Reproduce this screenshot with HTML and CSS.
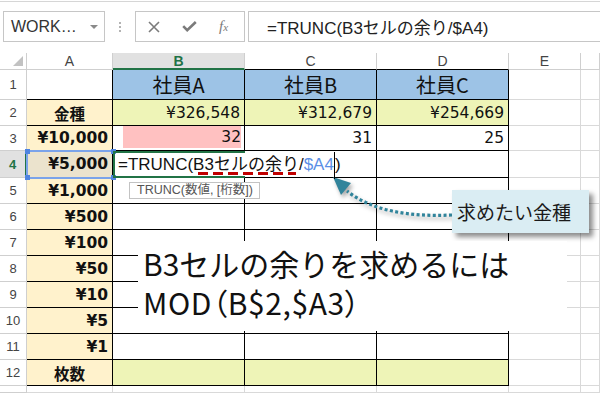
FILE: index.html
```html
<!DOCTYPE html>
<html lang="ja">

<head>
    <meta charset="UTF-8">
    <title>TRUNC関数で枚数を求める</title>
    <link rel="stylesheet" href="styles.css">
</head>

<body>

    <div class="ribbon-edge"></div>

    <div class="formula-bar">
        <div class="name-box">
            <span>WORK…</span>
            <span class="drop"></span>
        </div>
        <div class="grip"><i></i><i></i><i></i></div>
        <div class="fx-box">
            <svg width="12" height="12" viewBox="0 0 12 12"><path d="M1 1L11 11M11 1L1 11" stroke="#7b7b7b" stroke-width="1.6" fill="none"/></svg>
            <svg width="15" height="11" viewBox="0 0 15 11"><path d="M1.2 5.2L5.2 9.2L13.8 1" stroke="#7b7b7b" stroke-width="2.6" fill="none"/></svg>
            <span class="fx">f<small>x</small></span>
        </div>
        <div class="formula-input">=TRUNC(B3セルの余り/$A4)</div>
    </div>

    <div class="sheet-wrap">
        <div class="sheet">
            <!-- 列見出し -->
            <div class="corner"><span></span></div>
            <div class="ch">A</div>
            <div class="ch sel">B</div>
            <div class="ch tb">C</div>
            <div class="ch tb">D</div>
            <div class="ch">E</div>
            <div class="ch"></div>

            <!-- 1 -->
            <div class="rh">1</div>
            <div class="t"></div>
            <div class="t blue">社員A</div>
            <div class="t blue">社員B</div>
            <div class="t blue">社員C</div>
            <div class="g"></div>
            <div class="g"></div>

            <!-- 2 -->
            <div class="rh">2</div>
            <div class="t a c">金種</div>
            <div class="t yg num">¥326,548</div>
            <div class="t yg num">¥312,679</div>
            <div class="t yg num">¥254,669</div>
            <div class="g"></div>
            <div class="g"></div>

            <!-- 3 -->
            <div class="rh">3</div>
            <div class="t a">¥10,000</div>
            <div class="t num"><span class="pink">32</span></div>
            <div class="t num">31</div>
            <div class="t num">25</div>
            <div class="g"></div>
            <div class="g"></div>

            <!-- 4 (編集中) -->
            <div class="rh cur">4</div>
            <div class="t a ref-cell">¥5,000</div>
            <div class="t edit"><span>=TRUNC(<span class="squiggle">B3セルの余り</span>/<span class="ref">$A4</span><span class="caret"></span>)</span></div>
            <div class="t"></div>
            <div class="t"></div>
            <div class="g"></div>
            <div class="g"></div>

            <!-- 5 -->
            <div class="rh">5</div>
            <div class="t a">¥1,000</div>
            <div class="t"></div>
            <div class="t"></div>
            <div class="t"></div>
            <div class="g"></div>
            <div class="g"></div>

            <!-- 6 -->
            <div class="rh">6</div>
            <div class="t a">¥500</div>
            <div class="t"></div>
            <div class="t"></div>
            <div class="t"></div>
            <div class="g"></div>
            <div class="g"></div>

            <!-- 7 -->
            <div class="rh">7</div>
            <div class="t a">¥100</div>
            <div class="t"></div>
            <div class="t"></div>
            <div class="t"></div>
            <div class="g"></div>
            <div class="g"></div>

            <!-- 8 -->
            <div class="rh">8</div>
            <div class="t a">¥50</div>
            <div class="t"></div>
            <div class="t"></div>
            <div class="t"></div>
            <div class="g"></div>
            <div class="g"></div>

            <!-- 9 -->
            <div class="rh">9</div>
            <div class="t a">¥10</div>
            <div class="t"></div>
            <div class="t"></div>
            <div class="t"></div>
            <div class="g"></div>
            <div class="g"></div>

            <!-- 10 -->
            <div class="rh">10</div>
            <div class="t a">¥5</div>
            <div class="t"></div>
            <div class="t"></div>
            <div class="t"></div>
            <div class="g"></div>
            <div class="g"></div>

            <!-- 11 -->
            <div class="rh">11</div>
            <div class="t a">¥1</div>
            <div class="t"></div>
            <div class="t"></div>
            <div class="t"></div>
            <div class="g"></div>
            <div class="g"></div>

            <!-- 12 -->
            <div class="rh">12</div>
            <div class="t a c">枚数</div>
            <div class="t yg"></div>
            <div class="t yg"></div>
            <div class="t yg"></div>
            <div class="g"></div>
            <div class="g"></div>

            <!-- 13 -->
            <div class="rh"></div>
            <div class="g"></div>
            <div class="g"></div>
            <div class="g"></div>
            <div class="g"></div>
            <div class="g"></div>
            <div class="g"></div>
        </div>

        <!-- シートの上に重ねるもの -->
        <div class="ref-box"><i class="h tl"></i><i class="h tr"></i><i class="h bl"></i><i class="h br"></i></div>
        <div class="tooltip">TRUNC(数値, [桁数])</div>

        <svg class="arrow" width="135" height="52" viewBox="325 173 135 52">
            <path d="M452 215C410 217 372 211 347 191" fill="none" stroke="#31849b" stroke-width="3.2" stroke-dasharray="3 2.4"/>
            <polygon points="333,177 351,183 341,195" fill="#31849b"/>
        </svg>
        <div class="callout">求めたい金種</div>

        <div class="note">
            <div class="line">B3セルの余りを求めるには</div>
            <div class="line palt">MOD（B$2,$A3）</div>
        </div>
    </div>

</body>

</html>
```

FILE: styles.css
```css
body {
    margin: 0;
    background: #fff;
    font-family: "Liberation Sans", "Noto Sans CJK JP", sans-serif;
    color: #111;
    overflow: hidden;
}

.ribbon-edge {
    height: 1px;
    margin-top: 1px;
    background: #d6d6d6;
}

/* 数式バー */
.formula-bar {
    display: flex;
    height: 31px;
    margin-top: 9px;
    padding-left: 3px;
}

.name-box {
    width: 102px;
    box-sizing: border-box;
    border: 1px solid #c6c6c6;
    display: flex;
    align-items: center;
    padding-left: 7px;
    font-size: 16px;
    color: #333;
}

.name-box .drop {
    margin-left: auto;
    margin-right: 6px;
    border-left: 4px solid transparent;
    border-right: 4px solid transparent;
    border-top: 4px solid #8a8a8a;
}

.grip {
    width: 30px;
    display: flex;
    flex-direction: column;
    align-items: center;
    justify-content: center;
    gap: 2px;
}

.grip i {
    width: 2px;
    height: 2px;
    background: #b3b3b3;
}

.fx-box {
    width: 110px;
    box-sizing: border-box;
    border: 1px solid #c6c6c6;
    display: flex;
    align-items: center;
    gap: 22px;
    padding-left: 12px;
}

.fx {
    font-family: "Liberation Serif", serif;
    font-style: italic;
    font-size: 15px;
    color: #7b7b7b;
}

.fx small {
    font-size: 11px;
}

.formula-input {
    flex: 1;
    margin-left: 3px;
    margin-right: -2px;
    border: 1px solid #c6c6c6;
    display: flex;
    align-items: center;
    padding-left: 18px;
    font-size: 17px;
    color: #222;
}

/* シート */
.sheet-wrap {
    position: relative;
    margin-top: 11px;
}

.sheet {
    height: 340px;
    display: grid;
    grid-template-columns: 27px 86px 132px 132px 132px 72px 1fr;
    grid-template-rows: 17px 30px 26px 25px 27px repeat(8, 26px) 1fr;
}

.sheet > div {
    box-sizing: border-box;
    border-right: 1px solid #d9d9d9;
    border-bottom: 1px solid #d9d9d9;
    display: flex;
    align-items: center;
    min-width: 0;
}

.sheet > .corner {
    justify-content: flex-end;
    align-items: flex-end;
    padding: 0 3px 3px 0;
    border-color: #cfcfcf;
}

.corner span {
    border-left: 10px solid transparent;
    border-bottom: 10px solid #c2c2c2;
}

.sheet > .ch {
    justify-content: center;
    font-size: 14px;
    color: #444;
    border-color: #cfcfcf;
}

.sheet > .ch.sel {
    background: #e1e1e1;
    color: #217346;
    font-weight: bold;
    border-bottom: 2px solid #217346;
}

.sheet > .ch.tb {
    border-bottom-color: #000;
}

.sheet > .rh {
    justify-content: center;
    font-size: 13px;
    color: #444;
    border-color: #cfcfcf;
}

.sheet > .rh.cur {
    background: #e1e1e1;
    color: #217346;
    font-weight: bold;
    border-right: 2px solid #217346;
}

.sheet > .t {
    border-color: #000;
}

.blue {
    background: #9dc3e6;
    justify-content: center;
    font-family: "Noto Sans CJK JP", sans-serif;
    font-size: 20px;
}

.yg {
    background: #eef4b7;
}

.a {
    background: #fff2cc;
    justify-content: flex-end;
    padding-right: 4px;
    font-family: "DejaVu Sans", "Noto Sans CJK JP", sans-serif;
    font-weight: bold;
    font-size: 15.5px;
}

.a.c {
    justify-content: center;
    padding-right: 0;
}

.a.ref-cell {
    background: #ebe3cd;
}

.num {
    justify-content: flex-end;
    padding-right: 4px;
    font-family: "DejaVu Sans", sans-serif;
    font-size: 15.5px;
}

.num .pink {
    flex: 1;
    align-self: stretch;
    margin: 0 -1px 2px 10px;
    background: #ffc1c1;
    display: flex;
    align-items: center;
    justify-content: flex-end;
}

/* 編集中のセル */
.sheet > .edit {
    position: relative;
    z-index: 1;
    border-right: none;
    border-bottom: 1px solid #217346;
    box-shadow: inset 2px 2px 0 #217346, inset 0 -1px 0 #217346;
    padding-left: 5px;
    white-space: nowrap;
    overflow: visible;
    font-size: 17px;
}

.squiggle {
    position: relative;
}

.squiggle::after {
    content: "";
    position: absolute;
    left: 5px;
    right: 3px;
    bottom: -1px;
    height: 3px;
    background: repeating-linear-gradient(90deg, #c00000 0 10px, transparent 10px 15px);
}

.ref {
    color: #5b8fe6;
}

.caret {
    display: inline-block;
    width: 1px;
    height: 27px;
    background: #000;
    vertical-align: middle;
}

/* 参照セルの枠 */
.ref-box {
    position: absolute;
    left: 26px;
    top: 97px;
    width: 89px;
    height: 29px;
    box-sizing: border-box;
    border: 2px solid #7aa3ea;
}

.ref-box .h {
    position: absolute;
    width: 5px;
    height: 5px;
    background: #4f84e0;
}

.h.tl { left: -3px; top: -3px; }
.h.tr { right: -3px; top: -3px; }
.h.bl { left: -3px; bottom: -3px; }
.h.br { right: -3px; bottom: -3px; }

.tooltip {
    position: absolute;
    left: 129px;
    top: 129px;
    width: 131px;
    height: 17px;
    box-sizing: border-box;
    border: 1px solid #c3c3c3;
    background: #fff;
    font-size: 12.5px;
    line-height: 15px;
    padding-left: 7px;
    color: #555;
    white-space: nowrap;
}

.arrow {
    position: absolute;
    left: 325px;
    top: 120px;
    filter: drop-shadow(2px 3px 2px rgba(0, 0, 0, 0.35));
}

.callout {
    position: absolute;
    left: 452px;
    top: 137px;
    width: 137px;
    height: 43px;
    background: #daedf3;
    box-shadow: 4px 4px 5px rgba(0, 0, 0, 0.45);
    font-family: "Noto Sans CJK JP", sans-serif;
    font-size: 19px;
    line-height: 43px;
    padding-left: 5px;
    box-sizing: border-box;
    color: #1a1a1a;
}

.note {
    position: absolute;
    left: 138px;
    top: 188px;
    width: 429px;
    height: 90px;
    background: #fff;
    box-sizing: border-box;
    padding: 3px 0 0 5px;
    font-family: "Noto Sans CJK JP", sans-serif;
    font-size: 30px;
    color: #111;
    white-space: nowrap;
}

.note .line {
    height: 39px;
    line-height: 30px;
    padding-top: 4px;
    box-sizing: border-box;
}

.palt {
    font-feature-settings: "palt";
    letter-spacing: 0.6px;
}
```
